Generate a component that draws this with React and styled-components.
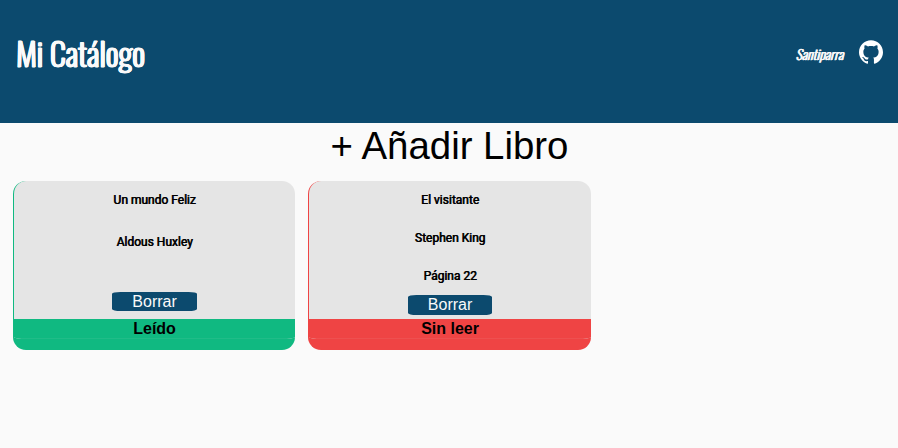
import React from "react";
import styled, { createGlobalStyle } from "styled-components";

const GlobalStyle = createGlobalStyle`
  *, *::before, *::after { box-sizing: border-box; }
  body {
    margin: 0;
    background: #fafafa;
    color: #000;
    font-family: "Liberation Sans", Arial, sans-serif;
  }
`;

const Header = styled.header`
  display: flex;
  justify-content: space-between;
  align-items: flex-start;
  height: 123px;
  padding: 30px 15px 0 16px;
  background: #0c4a6e;
  color: #fafafa;
`;

const Title = styled.h1`
  margin: 0;
  font: 300 32px/46px Oswald, Roboto, sans-serif;
  -webkit-text-stroke: 0.8px #fafafa;
  text-shadow: 0.5px 0 #fafafa, -0.5px 0 #fafafa, 1px 0 #fafafa, 0.7px 0 #fafafa;
  white-space: nowrap;
`;

const Profile = styled.div`
  display: flex;
  gap: 16px;
  padding-top: 10px;
`;

const Author = styled.span`
  font: italic 300 13.6px/28px Oswald, Roboto, sans-serif;
  -webkit-text-stroke: 0.3px #fafafa;
  text-shadow: 0.5px 0 #fafafa, 0.8px 0 #fafafa;
  white-space: nowrap;
`;

const GithubIcon = styled.svg`
  width: 24px;
  height: 24px;
  fill: #fff;
`;

const AddBook = styled.button`
  display: block;
  width: 100%;
  height: 46px;
  padding: 0 0 0 1px;
  border: 0;
  background: none;
  color: #000;
  font: 38.4px/46px "Liberation Sans", Arial, sans-serif;
  text-align: center;
`;

const Shelf = styled.main`
  display: grid;
  grid-template-columns: repeat(3, 282.5px);
  gap: 13px;
  padding: 12px 12.8px;
`;

const Card = styled.article`
  display: flex;
  flex-direction: column;
  height: 169px;
  overflow: hidden;
  border-left: 1px solid ${(p) => p.$color};
  border-bottom: 11px solid ${(p) => p.$color};
  border-radius: 13px;
  background: #e5e5e5;
  text-align: center;
`;

const Details = styled.div`
  display: flex;
  flex-direction: column;
  align-items: center;
  height: 138px;
  padding-top: 9px;
`;

const Line = styled.p`
  margin: 0 0 ${(p) => p.$gap}px;
  font: 400 12px/20px Roboto, sans-serif;
  -webkit-text-stroke: 0.2px #000;
  text-shadow: 0.5px 0 #000;
`;

const Delete = styled.button`
  width: ${(p) => p.$width}px;
  height: ${(p) => p.$height}px;
  padding: 0;
  border: 0;
  border-radius: 10%;
  background: #0c4a6e;
  color: #fafafa;
  font: 16px/18px "Liberation Sans", Arial, sans-serif;
`;

const Status = styled.div`
  height: 20px;
  border-bottom: 1px solid rgba(229, 229, 229, 0.08);
  background: ${(p) => p.$color};
  font: 700 16px/19px "Liberation Sans", Arial, sans-serif;
`;

const books = [
  {
    lines: [["Un mundo Feliz", 22], ["Aldous Huxley", 40]],
    width: 85,
    height: 19,
    status: "Leído",
    color: "#10b981",
  },
  {
    lines: [["El visitante", 18], ["Stephen King", 18], ["Página 22", 9]],
    width: 84,
    height: 20,
    status: "Sin leer",
    color: "#ef4444",
  },
];

export default function App() {
  return (
    <>
      <GlobalStyle />
      <Header>
        <Title>Mi Catálogo</Title>
        <Profile>
          <Author>Santiparra</Author>
          <GithubIcon viewBox="0 0 24 24" aria-label="GitHub">
            <path d="M12 .297c-6.63 0-12 5.373-12 12 0 5.303 3.438 9.8 8.205 11.385.6.113.82-.258.82-.577 0-.285-.01-1.04-.015-2.04-3.338.724-4.042-1.61-4.042-1.61C4.422 18.07 3.633 17.7 3.633 17.7c-1.087-.744.084-.729.084-.729 1.205.084 1.838 1.236 1.838 1.236 1.07 1.835 2.809 1.305 3.495.998.108-.776.417-1.305.76-1.605-2.665-.3-5.466-1.332-5.466-5.93 0-1.31.465-2.38 1.235-3.22-.135-.303-.54-1.523.105-3.176 0 0 1.005-.322 3.3 1.23.96-.267 1.98-.399 3-.405 1.02.006 2.04.138 3 .405 2.28-1.552 3.285-1.23 3.285-1.23.645 1.653.24 2.873.12 3.176.765.84 1.23 1.91 1.23 3.22 0 4.61-2.805 5.625-5.475 5.92.42.36.81 1.096.81 2.22 0 1.606-.015 2.896-.015 3.286 0 .315.21.69.825.57C20.565 22.092 24 17.592 24 12.297c0-6.627-5.373-12-12-12" />
          </GithubIcon>
        </Profile>
      </Header>
      <AddBook>+ Añadir Libro</AddBook>
      <Shelf>
        {books.map((b) => (
          <Card key={b.status} $color={b.color}>
            <Details>
              {b.lines.map(([text, gap]) => (
                <Line key={text} $gap={gap}>{text}</Line>
              ))}
              <Delete $width={b.width} $height={b.height}>Borrar</Delete>
            </Details>
            <Status $color={b.color}>{b.status}</Status>
          </Card>
        ))}
      </Shelf>
    </>
  );
}
